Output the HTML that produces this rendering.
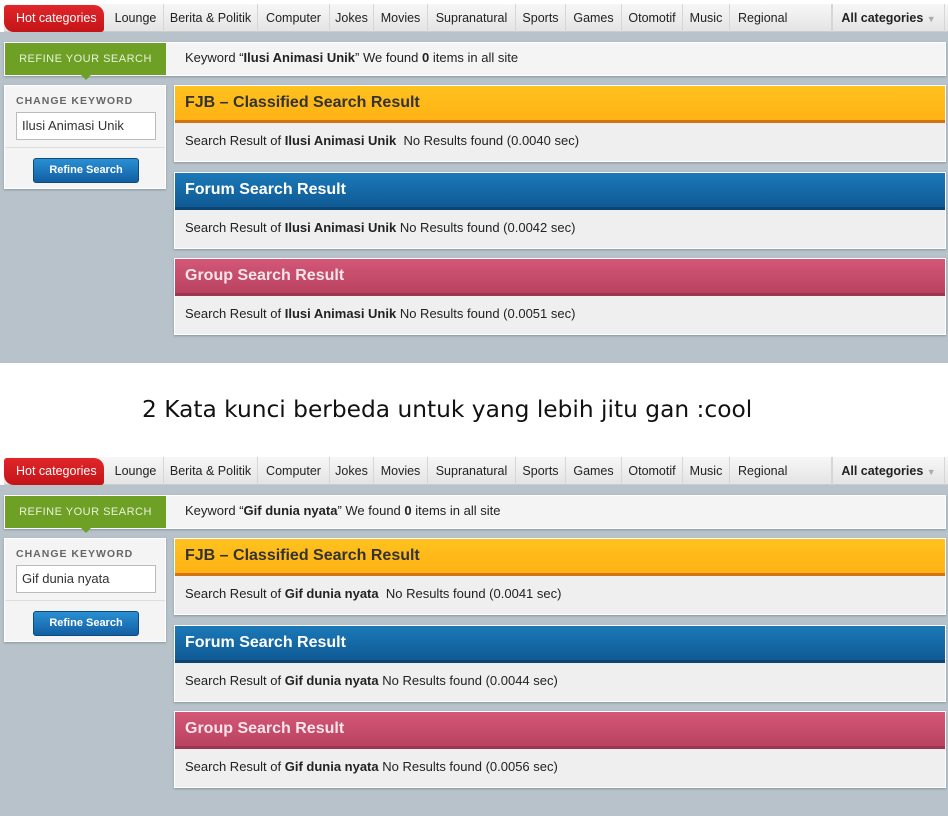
<!DOCTYPE html>
<html><head><style>
*{margin:0;padding:0;box-sizing:border-box}
body{width:948px;height:812px;background:#fff;font-family:"Liberation Sans",Arial,sans-serif;position:relative;overflow:hidden}
.blk{position:absolute;left:0;width:948px;height:363px;background:#b7c2ca}
.nav{position:absolute;left:0;top:0;width:948px;height:32px;background:#fff}
.navbar{position:absolute;left:4px;top:4px;width:944px;height:28px;background:linear-gradient(#f7f7f7,#e4e4e4);border-bottom:1px solid #ccc}
.ni{position:absolute;top:4px;height:28px;line-height:28px;font-size:12.5px;color:#222;text-align:center;border-right:1px solid #d6d6d6}
.hot{position:absolute;left:4px;top:5px;width:100px;height:27px;background:linear-gradient(#e0262a,#c41418);color:#fff;font-size:12.5px;line-height:26px;padding-left:12px;border-radius:3px 10px 3px 10px}
.rbar{position:absolute;left:4px;top:42px;width:942px;height:34px;background:#f4f4f4;border:1px solid #fff;box-shadow:0 1px 2px #8a969e}
.rg{position:absolute;left:0;top:0;width:161px;height:32px;background:#6ea025;color:#e8f2da;font-size:11px;letter-spacing:.5px;line-height:32px;text-align:center}
.rg:after{content:"";position:absolute;left:76px;top:32px;border:5px solid transparent;border-top-color:#6ea025}
.kw{position:absolute;left:180px;top:0;line-height:30px;font-size:13px;color:#222}
.lp{position:absolute;left:4px;top:85px;width:162px;height:104px;background:#f4f4f4;border:1px solid #fff;box-shadow:0 1px 2px #8a969e}
.lp h4{position:absolute;left:11px;top:9px;font-size:10.5px;letter-spacing:1px;color:#666}
.inp{position:absolute;left:11px;top:26px;width:140px;height:28px;background:#fff;border:1px solid #bbb;font-size:13px;line-height:26px;padding-left:5px;color:#333}
.sep{position:absolute;left:0;top:61px;width:160px;border-top:1px solid #ddd}
.btn{position:absolute;left:28px;top:72px;width:106px;height:25px;border-radius:3px;background:linear-gradient(#2b8fd3,#125fa3);border:1px solid #0d4a80;color:#fff;font-size:11px;font-weight:bold;text-align:center;line-height:23px}
.box{position:absolute;left:174px;width:772px;background:#efefef;border:1px solid #fff;box-shadow:0 1px 2px #8a969e}
.hd{height:37px;line-height:34px;padding-left:10px;font-size:16px;font-weight:bold}
.bd{height:38px;line-height:36px;padding-left:10px;font-size:13px;color:#222}
.fjb{background:linear-gradient(#ffc21f,#ffb214);border-bottom:3px solid #d37312;color:#333}
.frm{background:linear-gradient(#1b79b8,#0f5a94);border-bottom:3px solid #0b4574;color:#fff}
.grp{background:linear-gradient(#d45777,#b94260);border-bottom:3px solid #9c3550;color:#f4e6ea}
.mid{position:absolute;left:142px;top:396px;white-space:nowrap;font-family:"DejaVu Sans",sans-serif;font-size:23.3px;color:#111}
</style></head><body>

<div class="blk" style="top:0">
<div class="nav"></div><div class="navbar"></div>
<div class="hot">Hot categories</div>
<div class="ni" style="left:108px;width:56px">Lounge</div>
<div class="ni" style="left:164px;width:94px">Berita &amp; Politik</div>
<div class="ni" style="left:258px;width:72px">Computer</div>
<div class="ni" style="left:330px;width:44px">Jokes</div>
<div class="ni" style="left:374px;width:54px">Movies</div>
<div class="ni" style="left:428px;width:88px">Supranatural</div>
<div class="ni" style="left:516px;width:50px">Sports</div>
<div class="ni" style="left:566px;width:56px">Games</div>
<div class="ni" style="left:622px;width:61px">Otomotif</div>
<div class="ni" style="left:683px;width:47px">Music</div>
<div class="ni" style="left:730px;width:102px;text-align:left;padding-left:8px">Regional</div>
<div class="ni" style="left:832px;width:113px;font-weight:bold;border-left:1px solid #d6d6d6">All categories <span style="color:#aaa;font-size:9px">▼</span></div>
<div class="rbar"><div class="rg">REFINE YOUR SEARCH</div><div class="kw">Keyword “<b>Ilusi Animasi Unik</b>” We found <b>0</b> items in all site</div></div>
<div class="lp"><h4>CHANGE KEYWORD</h4><div class="inp">Ilusi Animasi Unik</div><div class="sep"></div><div class="btn">Refine Search</div></div>
<div class="box" style="top:85px"><div class="hd fjb">FJB – Classified Search Result</div><div class="bd">Search Result of <b>Ilusi Animasi Unik</b>&nbsp; No Results found (0.0040 sec)</div></div>
<div class="box" style="top:172px"><div class="hd frm">Forum Search Result</div><div class="bd">Search Result of <b>Ilusi Animasi Unik</b> No Results found (0.0042 sec)</div></div>
<div class="box" style="top:258px"><div class="hd grp">Group Search Result</div><div class="bd">Search Result of <b>Ilusi Animasi Unik</b> No Results found (0.0051 sec)</div></div>
</div>

<div class="mid">2 Kata kunci berbeda untuk yang lebih jitu gan :cool</div>

<div class="blk" style="top:453px">
<div class="nav"></div><div class="navbar"></div>
<div class="hot">Hot categories</div>
<div class="ni" style="left:108px;width:56px">Lounge</div>
<div class="ni" style="left:164px;width:94px">Berita &amp; Politik</div>
<div class="ni" style="left:258px;width:72px">Computer</div>
<div class="ni" style="left:330px;width:44px">Jokes</div>
<div class="ni" style="left:374px;width:54px">Movies</div>
<div class="ni" style="left:428px;width:88px">Supranatural</div>
<div class="ni" style="left:516px;width:50px">Sports</div>
<div class="ni" style="left:566px;width:56px">Games</div>
<div class="ni" style="left:622px;width:61px">Otomotif</div>
<div class="ni" style="left:683px;width:47px">Music</div>
<div class="ni" style="left:730px;width:102px;text-align:left;padding-left:8px">Regional</div>
<div class="ni" style="left:832px;width:113px;font-weight:bold;border-left:1px solid #d6d6d6">All categories <span style="color:#aaa;font-size:9px">▼</span></div>
<div class="rbar"><div class="rg">REFINE YOUR SEARCH</div><div class="kw">Keyword “<b>Gif dunia nyata</b>” We found <b>0</b> items in all site</div></div>
<div class="lp"><h4>CHANGE KEYWORD</h4><div class="inp">Gif dunia nyata</div><div class="sep"></div><div class="btn">Refine Search</div></div>
<div class="box" style="top:85px"><div class="hd fjb">FJB – Classified Search Result</div><div class="bd">Search Result of <b>Gif dunia nyata</b>&nbsp; No Results found (0.0041 sec)</div></div>
<div class="box" style="top:172px"><div class="hd frm">Forum Search Result</div><div class="bd">Search Result of <b>Gif dunia nyata</b> No Results found (0.0044 sec)</div></div>
<div class="box" style="top:258px"><div class="hd grp">Group Search Result</div><div class="bd">Search Result of <b>Gif dunia nyata</b> No Results found (0.0056 sec)</div></div>
</div>

</body></html>
